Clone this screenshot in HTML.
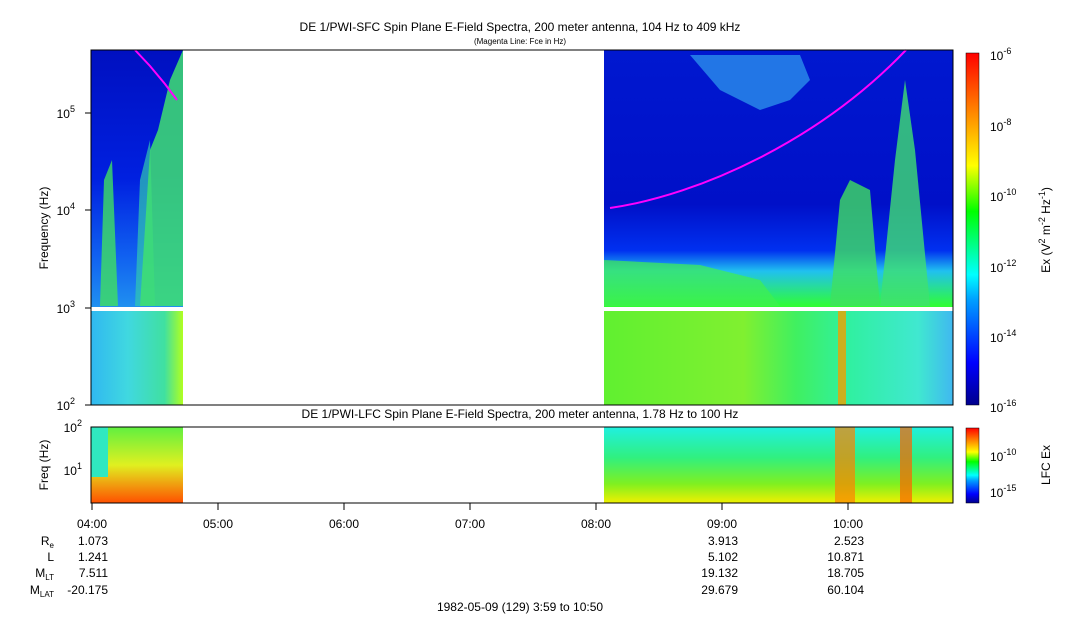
<!DOCTYPE html><html><head><style>body{margin:0;background:#fff}svg{display:block;font-family:"Liberation Sans",sans-serif}</style></head><body>
<svg width="1083" height="620" viewBox="0 0 1083 620" xmlns="http://www.w3.org/2000/svg">
<defs>
<linearGradient id="cb" x1="0" y1="1" x2="0" y2="0">
<stop offset="0" stop-color="#00008c"/><stop offset="0.12" stop-color="#0000ff"/><stop offset="0.3" stop-color="#00a0ff"/><stop offset="0.37" stop-color="#00ffff"/><stop offset="0.55" stop-color="#00ff00"/><stop offset="0.68" stop-color="#ffff00"/><stop offset="0.8" stop-color="#ffa000"/><stop offset="1" stop-color="#ff0000"/></linearGradient>
<linearGradient id="lt" x1="0" y1="0" x2="0" y2="1"><stop offset="0" stop-color="#0010c0"/><stop offset="0.5" stop-color="#0020e0"/><stop offset="0.8" stop-color="#1060f0"/><stop offset="1" stop-color="#2090f0"/></linearGradient>
<linearGradient id="lb" x1="0" y1="0" x2="1" y2="0"><stop offset="0" stop-color="#30b8f0"/><stop offset="0.4" stop-color="#40d8e0"/><stop offset="0.8" stop-color="#40e0a0"/><stop offset="1" stop-color="#b0ff20"/></linearGradient>
<linearGradient id="rt" x1="0" y1="0" x2="0" y2="1"><stop offset="0" stop-color="#0018d0"/><stop offset="0.6" stop-color="#0010c8"/><stop offset="0.78" stop-color="#0030f0"/><stop offset="0.86" stop-color="#20c0f0"/><stop offset="1" stop-color="#30ff30"/></linearGradient>
<linearGradient id="rb" x1="0" y1="0" x2="1" y2="0"><stop offset="0" stop-color="#60f030"/><stop offset="0.4" stop-color="#80f030"/><stop offset="0.55" stop-color="#40f060"/><stop offset="0.7" stop-color="#30f0a0"/><stop offset="0.9" stop-color="#40e8d0"/><stop offset="1" stop-color="#40b8f0"/></linearGradient>
<linearGradient id="ll" x1="0" y1="0" x2="0" y2="1"><stop offset="0" stop-color="#60f040"/><stop offset="0.5" stop-color="#e0f020"/><stop offset="1" stop-color="#ff5000"/></linearGradient>
<linearGradient id="lr" x1="0" y1="0" x2="0" y2="1"><stop offset="0" stop-color="#20f0e0"/><stop offset="0.4" stop-color="#30f080"/><stop offset="0.75" stop-color="#80f020"/><stop offset="1" stop-color="#f0f000"/></linearGradient>
</defs>
<text x="520" y="31" font-size="12" text-anchor="middle">DE 1/PWI-SFC  Spin Plane E-Field Spectra, 200 meter antenna, 104 Hz to 409 kHz</text>
<text x="520" y="44" font-size="8" text-anchor="middle">(Magenta Line: Fce in Hz)</text>
<rect x="91" y="50" width="92" height="257" fill="url(#lt)"/>
<path d="M100 306 L104 180 L112 160 L118 306Z" fill="#40e060" opacity="0.8"/>
<path d="M135 306 L140 180 L150 140 L155 306Z" fill="#30c8b0" opacity="0.7"/>
<path d="M140 306 L150 150 L158 130 L170 80 L183 50 L183 306Z" fill="#40e070" opacity="0.85"/>
<rect x="91" y="311" width="92" height="94" fill="url(#lb)"/>
<rect x="604" y="50" width="349" height="257" fill="url(#rt)"/>
<path d="M690 55 L800 55 L810 80 L790 100 L760 110 L720 90Z" fill="#30a0f0" opacity="0.7"/>
<path d="M830 306 L840 200 L850 180 L870 190 L880 306Z" fill="#40e060" opacity="0.8"/>
<path d="M880 306 L895 160 L905 80 L915 150 L930 306Z" fill="#40e070" opacity="0.8"/>
<path d="M604 260 L700 265 L760 280 L780 306 L604 306Z" fill="#40f050" opacity="0.7"/>
<rect x="604" y="311" width="349" height="94" fill="url(#rb)"/>
<rect x="838" y="311" width="8" height="94" fill="#f0a000" opacity="0.8"/>
<path d="M135 50 L150 66 L165 84 L177 100" stroke="#ff00ff" stroke-width="2" fill="none"/>
<path d="M610 208 C700 195 820 140 906 50" stroke="#ff00ff" stroke-width="2" fill="none"/>
<rect x="91" y="50" width="862" height="355" fill="none" stroke="#000"/>
<g stroke="#000"><line x1="85" y1="113" x2="91" y2="113"/><line x1="85" y1="210" x2="91" y2="210"/><line x1="85" y1="308" x2="91" y2="308"/><line x1="85" y1="405" x2="91" y2="405"/></g>
<g font-size="12" text-anchor="end"><text x="75" y="118">10<tspan font-size="9" dy="-6">5</tspan></text><text x="75" y="215">10<tspan font-size="9" dy="-6">4</tspan></text><text x="75" y="313">10<tspan font-size="9" dy="-6">3</tspan></text><text x="75" y="410">10<tspan font-size="9" dy="-6">2</tspan></text></g>
<text transform="translate(48 228) rotate(-90)" font-size="12" text-anchor="middle">Frequency (Hz)</text>
<rect x="966" y="53" width="13" height="352" fill="url(#cb)" stroke="#000" stroke-width="0.5"/>
<g font-size="12"><text x="990" y="60">10<tspan font-size="9" dy="-6">-6</tspan></text><text x="990" y="131">10<tspan font-size="9" dy="-6">-8</tspan></text><text x="990" y="201">10<tspan font-size="9" dy="-6">-10</tspan></text><text x="990" y="272">10<tspan font-size="9" dy="-6">-12</tspan></text><text x="990" y="342">10<tspan font-size="9" dy="-6">-14</tspan></text><text x="990" y="412">10<tspan font-size="9" dy="-6">-16</tspan></text></g>
<text transform="translate(1050 230) rotate(-90)" font-size="12" text-anchor="middle">Ex (V<tspan font-size="9" dy="-5">2</tspan><tspan dy="5"> m</tspan><tspan font-size="9" dy="-5">-2</tspan><tspan dy="5"> Hz</tspan><tspan font-size="9" dy="-5">-1</tspan><tspan dy="5">)</tspan></text>
<text x="520" y="418" font-size="12" text-anchor="middle">DE 1/PWI-LFC  Spin Plane E-Field Spectra, 200 meter antenna, 1.78 Hz to 100 Hz</text>
<rect x="91" y="427" width="92" height="76" fill="url(#ll)"/>
<rect x="91" y="427" width="17" height="50" fill="#30e8c0"/>
<rect x="604" y="427" width="349" height="76" fill="url(#lr)"/>
<rect x="835" y="427" width="20" height="76" fill="#ff8000" opacity="0.7"/>
<rect x="900" y="427" width="12" height="76" fill="#ff6000" opacity="0.7"/>
<rect x="91" y="427" width="862" height="76" fill="none" stroke="#000"/>
<g font-size="12" text-anchor="end"><text x="82" y="432">10<tspan font-size="9" dy="-6">2</tspan></text><text x="82" y="475">10<tspan font-size="9" dy="-6">1</tspan></text></g>
<text transform="translate(48 465) rotate(-90)" font-size="12" text-anchor="middle">Freq (Hz)</text>
<rect x="966" y="428" width="13" height="75" fill="url(#cb)" stroke="#000" stroke-width="0.5"/>
<g font-size="12"><text x="990" y="461">10<tspan font-size="9" dy="-6">-10</tspan></text><text x="990" y="497">10<tspan font-size="9" dy="-6">-15</tspan></text></g>
<text transform="translate(1050 465) rotate(-90)" font-size="12" text-anchor="middle">LFC Ex</text>
<g stroke="#000"><line x1="92" y1="503" x2="92" y2="510"/><line x1="218" y1="503" x2="218" y2="510"/><line x1="344" y1="503" x2="344" y2="510"/><line x1="470" y1="503" x2="470" y2="510"/><line x1="596" y1="503" x2="596" y2="510"/><line x1="722" y1="503" x2="722" y2="510"/><line x1="848" y1="503" x2="848" y2="510"/></g>
<g font-size="12" text-anchor="middle"><text x="92" y="528">04:00</text><text x="218" y="528">05:00</text><text x="344" y="528">06:00</text><text x="470" y="528">07:00</text><text x="596" y="528">08:00</text><text x="722" y="528">09:00</text><text x="848" y="528">10:00</text></g>
<g font-size="12" text-anchor="end">
<text x="54" y="545">R<tspan font-size="8" dy="3">e</tspan></text><text x="54" y="561">L</text><text x="54" y="577">M<tspan font-size="8" dy="3">LT</tspan></text><text x="54" y="594">M<tspan font-size="8" dy="3">LAT</tspan></text>
<text x="108" y="545">1.073</text><text x="108" y="561">1.241</text><text x="108" y="577">7.511</text><text x="108" y="594">-20.175</text>
<text x="738" y="545">3.913</text><text x="738" y="561">5.102</text><text x="738" y="577">19.132</text><text x="738" y="594">29.679</text>
<text x="864" y="545">2.523</text><text x="864" y="561">10.871</text><text x="864" y="577">18.705</text><text x="864" y="594">60.104</text>
</g>
<text x="520" y="611" font-size="12" text-anchor="middle">1982-05-09 (129) 3:59 to 10:50</text>
</svg></body></html>
